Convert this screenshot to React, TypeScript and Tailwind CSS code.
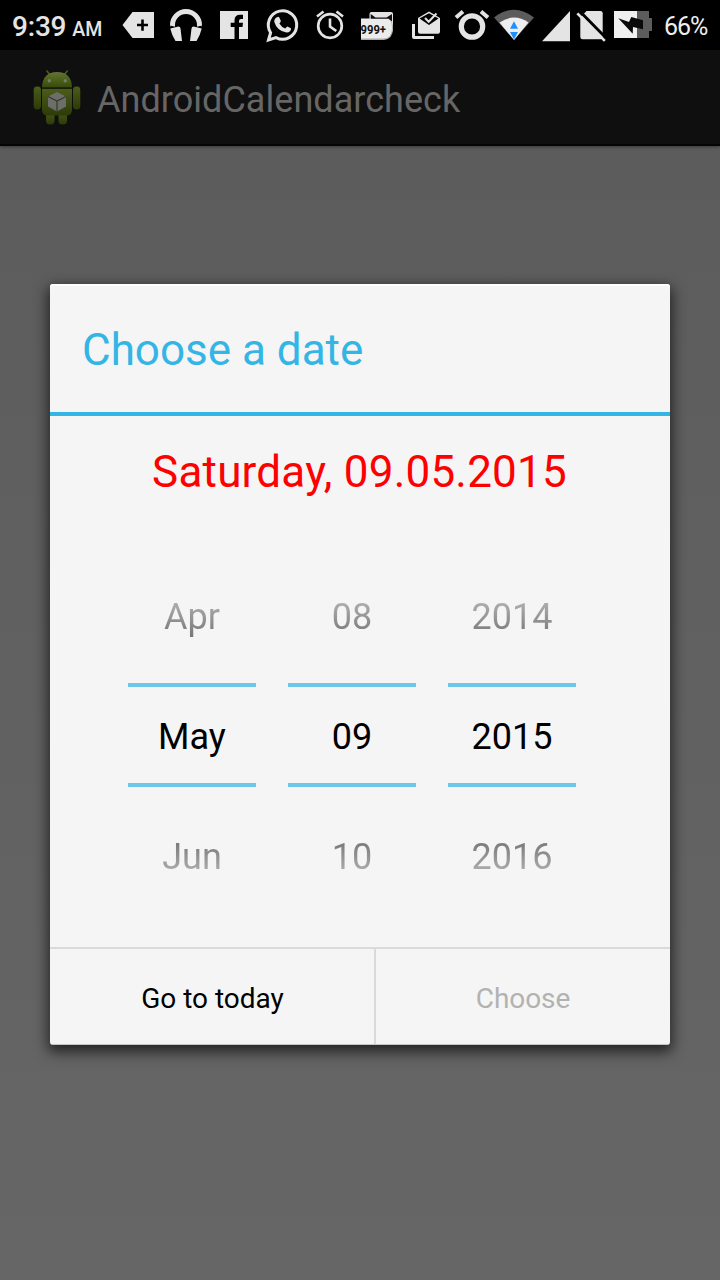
import type { ReactNode } from "react";

function StatusIcon({ x, w, children }: { x: number; w: number; children: ReactNode }) {
  return (
    <svg width={w} height={50} viewBox={`${x} 0 ${w} 50`} fill="#e4e4e4" className="block shrink-0">
      {children}
    </svg>
  );
}

function StatusBar() {
  return (
    <div className="flex h-[50px] shrink-0 bg-black text-[#e4e4e4]">
      <div className="flex w-[112px] shrink-0 items-baseline gap-[6px] whitespace-nowrap pl-3 pt-[6px] font-medium">
        <span className="text-[28px] leading-[42px] tracking-[-0.2px]">9:39</span>
        <span className="text-[19.5px]">AM</span>
      </div>
      {/* tag */}
      <StatusIcon x={112} w={50}>
        <path d="M122.5 25 132.5 12H154V38H132.5Z" />
        <path d="M142.5 19.5V30.7M137 25H148" stroke="#000" strokeWidth="2.6" />
      </StatusIcon>
      {/* headphones */}
      <StatusIcon x={162} w={48}>
        <path d="M172.5 27V25A13.5 13.5 0 0 1 199.5 25V27" fill="none" stroke="#e4e4e4" strokeWidth="5" />
        <path d="M169.5 26 181 28.5" stroke="#000" strokeWidth="1.2" />
        <path d="M202.5 26 191 28.5" stroke="#000" strokeWidth="1.2" />
        <path d="M170.3 28.5 178.5 26.5Q180.3 26.5 180.5 28.5L182 41H175.5Q172 36 170.3 28.5Z" />
        <path d="M201.7 28.5 193.5 26.5Q191.7 26.5 191.5 28.5L190 41H196.5Q200 36 201.7 28.5Z" />
      </StatusIcon>
      {/* facebook */}
      <StatusIcon x={210} w={50}>
        <rect x="220" y="11" width="28" height="28" />
        <path d="M234.5 39V27H230.7V22.7H234.5V20.5Q234.5 14.7 240 14.7H243V19H241Q239 19 239 21V22.7H243L242.5 27H239V39Z" fill="#000" />
      </StatusIcon>
      {/* whatsapp */}
      <StatusIcon x={260} w={46}>
        <path d="M268.5 40 270.6 32.7A14.2 14.2 0 1 1 276 37.6Z" fill="none" stroke="#e4e4e4" strokeWidth="3" />
        <path d="M277 17.2Q278.5 16.2 279.3 17.6L280.8 20.8Q281 22 279.4 23.4Q281.5 27 285.2 28.5L287.2 26.4 291 28.3Q291.3 32.2 286.5 32.6Q277 31 274.3 22Q274 18.7 277 17.2Z" />
      </StatusIcon>
      {/* alarm clock */}
      <StatusIcon x={306} w={46}>
        <circle cx="330" cy="26" r="11.8" fill="none" stroke="#e4e4e4" strokeWidth="2.7" />
        <path d="M330 18.5V26.5L336.3 31M317 16.5 323.5 11.5M343 16.5 336.5 11.5" fill="none" stroke="#e4e4e4" strokeWidth="2.6" />
      </StatusIcon>
      {/* mail with unread badge */}
      <StatusIcon x={352} w={50}>
        <rect x="369.5" y="12" width="23.5" height="20" rx="2" />
        <path d="M361 19H389Q393 22 393 28Q393 39 384 40H361Z" fill="#aaa" />
        <path d="M361 18.5H389Q392 22 392 28Q392 38 384 38.5H361Z" fill="#ececec" />
        <path d="M370.7 14 375.5 17.5H386.5L392 14V21.5L388.5 18.7H370.7Z" fill="#111" />
        <text x="360.5" y="34" fontSize="12" fontWeight="700" textLength="25.5" lengthAdjust="spacingAndGlyphs" fill="#111">
          999+
        </text>
      </StatusIcon>
      {/* inbox */}
      <StatusIcon x={402} w={46}>
        <path d="M412 24H415V36H434V39H414Q412 39 412 37Z" />
        <path d="M418 18 429 11.5 440 18V31.5Q440 33.7 438 33.7H420Q418 33.7 418 31.5Z" />
        <path d="M419.5 18.5 429 13.3 438.5 18.5 429 25Z" fill="#000" />
        <path d="M425 18 428.7 21.7 436.5 13.5" fill="none" stroke="#e4e4e4" strokeWidth="2" />
      </StatusIcon>
      {/* alarm ring */}
      <StatusIcon x={448} w={42}>
        <circle cx="472" cy="26.5" r="10.7" fill="none" stroke="#e4e4e4" strokeWidth="5.2" />
        <path d="M456 17.5 463 11.5M488 17.5 481 11.5" stroke="#e4e4e4" strokeWidth="4" />
      </StatusIcon>
      {/* wifi */}
      <StatusIcon x={490} w={48}>
        <path d="M514 40 494 17.5Q514 2 534 17.5Z" fill="#5c5c5c" />
        <path d="M514 40 499.5 22.5Q514 12.5 528.5 22.5Z" fill="#eee" />
        <path d="M514 21.3 518 28.7H510ZM510 32H518L514 39.5Z" fill="#1e90ff" />
      </StatusIcon>
      {/* signal */}
      <StatusIcon x={538} w={36}>
        <path d="M542 41.3 570 11V41.3Z" />
      </StatusIcon>
      {/* no sim */}
      <StatusIcon x={574} w={34}>
        <path d="M586.5 11H600.5Q602.7 11 602.7 13.2V37Q602.7 39.2 600.5 39.2H582.5Q580.3 39.2 580.3 37V17.5Z" />
        <path d="M579.5 11 606.5 38.5" stroke="#000" strokeWidth="3" />
        <path d="M577.3 13.3 604.8 40.8" stroke="#e4e4e4" strokeWidth="2.6" />
      </StatusIcon>
      {/* battery */}
      <StatusIcon x={608} w={48}>
        <path d="M637 11H649V18H652V31H649V38H637Z" fill="#5c5c5c" />
        <path d="M614 11H637V38H614Z" fill="#f0f0f0" />
        <path d="M618.3 18.3 629 22 631.3 17 643 20.3V29.3L633 27 632.7 33.7Z" fill="#0a0a0a" />
      </StatusIcon>
      <span className="pl-[8px] pt-[6px] text-[25px] leading-[42px] tracking-[-1px] text-[#eeeeee]">66%</span>
    </div>
  );
}

function AppIcon() {
  return (
    <svg width="64" height="64" viewBox="0 0 64 64" className="mt-[2px] block shrink-0">
      <defs>
        <linearGradient id="body" x1="0" y1="0" x2="0" y2="1">
          <stop offset="0" stopColor="#4b5c1a" />
          <stop offset="1" stopColor="#2d3b08" />
        </linearGradient>
        <linearGradient id="head" x1="0" y1="0" x2="0" y2="1">
          <stop offset="0" stopColor="#64733a" />
          <stop offset="0.5" stopColor="#4b6217" />
          <stop offset="1" stopColor="#394a0e" />
        </linearGradient>
      </defs>
      <path d="M26 9 23 5M40 9 43.3 5" stroke="#4b5f18" strokeWidth="1.6" strokeLinecap="round" />
      <rect x="22" y="44" width="8.5" height="14.5" rx="4" fill="url(#body)" />
      <rect x="34.5" y="44" width="8.5" height="14.5" rx="4" fill="url(#body)" />
      <rect x="9.7" y="20.5" width="7.3" height="23" rx="3.4" fill="url(#body)" />
      <rect x="49" y="20.5" width="7.3" height="23" rx="3.4" fill="url(#body)" />
      <path d="M18 23H48V44Q48 49.5 42 49.5H24Q18 49.5 18 44Z" fill="url(#body)" />
      <path d="M18 21.5Q18.5 6 33 6Q47.5 6 48 21.5Z" fill="url(#head)" />
      <path d="M18 22.3H48" stroke="#1a2206" strokeWidth="1.3" />
      <circle cx="25.3" cy="14.7" r="1.7" fill="#777b6d" />
      <circle cx="41.3" cy="14.7" r="1.7" fill="#777b6d" />
      <path d="M33 26 42 30.5V40.5L33 45.5 24 40.5V30.5Z" fill="#6d6d6a" />
      <path d="M24 30.5 33 35 42 30.5M33 35V45.5" fill="none" stroke="#343a29" strokeWidth="1.2" />
    </svg>
  );
}

const columns = [
  ["Apr", "May", "Jun"],
  ["08", "09", "10"],
  ["2014", "2015", "2016"],
];

function Wheel({ values }: { values: string[] }) {
  return (
    <div className="flex w-32 flex-col text-center text-[36px]">
      <div className="h-[126px] bg-linear-to-b from-[#b0b0b0] from-35% to-[#747474] to-65% bg-clip-text leading-[120px] text-transparent">
        {values[0]}
      </div>
      <div className="h-[100px] border-t-4 border-[#6cc7e9] leading-[100px] text-black">{values[1]}</div>
      <div className="h-1 bg-[#6cc7e9]" />
      <div className="mt-[10px] h-[120px] bg-linear-to-b from-[#747474] from-35% to-[#b4b4b4] to-65% bg-clip-text leading-[120px] text-transparent">
        {values[2]}
      </div>
    </div>
  );
}

export default function App() {
  return (
    <div className="flex h-[1280px] w-[720px] flex-col overflow-hidden bg-linear-to-b from-[#5b5b5b] to-[#666666] font-['Roboto',sans-serif]">
      <StatusBar />
      <header className="flex h-24 shrink-0 items-center border-b-2 border-[#050505] bg-[#0f0f0f] pl-6 shadow-[0_1px_3px_rgba(0,0,0,0.4)]">
        <AppIcon />
        <h1 className="ml-[9px] mt-[5px] text-[36px] leading-[44px] tracking-[0.04px] text-[#666666]">
          AndroidCalendarcheck
        </h1>
      </header>

      <main className="mx-[50px] mt-[138px] flex h-[761px] shrink-0 flex-col rounded-[3px] border-b border-[#c4c4c4] bg-[#f5f5f5] shadow-[0_5px_14px_2px_rgba(0,0,0,0.65),inset_0_2px_0_#ffffff]">
        <h2 className="h-[132px] shrink-0 border-b-4 border-[#33b5e5] pl-8 text-[44px] leading-[133px] text-[#33b5e5]">
          Choose a date
        </h2>
        <p className="h-[141px] shrink-0 pr-px text-center text-[44px] leading-[112px] tracking-[0.2px] text-[#ff0000]">
          Saturday, 09.05.2015
        </p>
        <div className="flex h-[390px] shrink-0 gap-8 pl-[78px]">
          {columns.map((values) => (
            <Wheel key={values[1]} values={values} />
          ))}
        </div>
        <div className="flex h-[97px] shrink-0 border-t-2 border-[#dadada] text-[28px]">
          <button className="h-[95px] w-[326px] overflow-hidden border-r-2 border-[#dadada] pl-px pt-px leading-[98px] text-black">
            Go to today
          </button>
          <button className="h-[95px] grow overflow-hidden pt-px leading-[98px] tracking-[-0.1px] text-[#b2b2b2]" disabled>
            Choose
          </button>
        </div>
      </main>
    </div>
  );
}
